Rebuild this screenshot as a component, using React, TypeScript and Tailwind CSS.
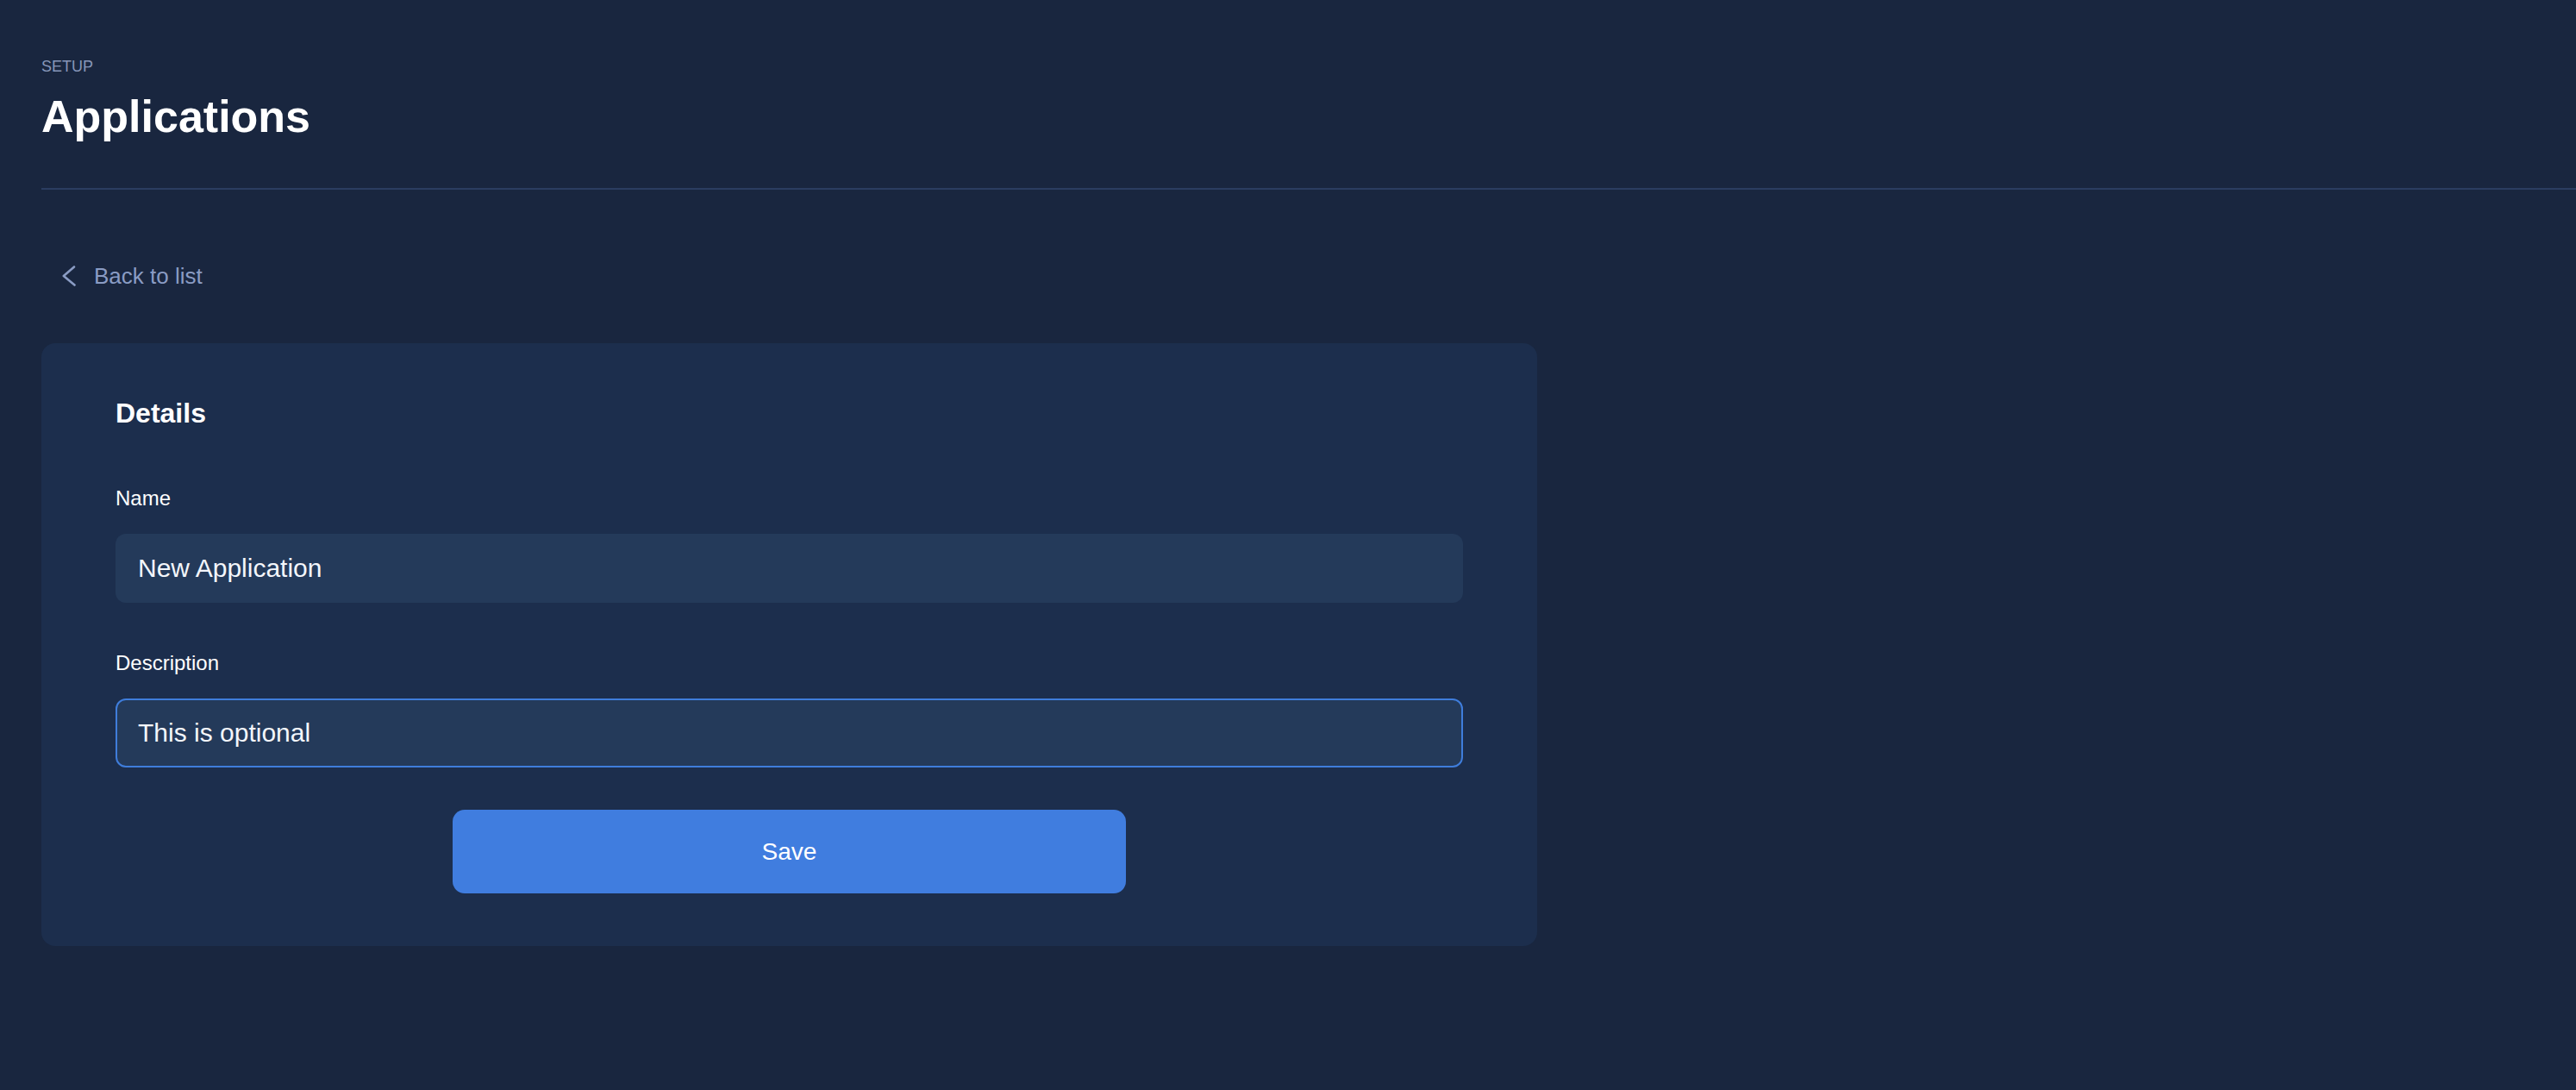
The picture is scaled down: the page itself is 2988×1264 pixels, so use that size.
import { useState } from 'react'

function BackChevron() {
  return (
    <svg width="16" height="24" viewBox="0 0 16 24" fill="none" aria-hidden>
      <polyline
        points="14,1.5 1.8,12 14.5,22.5"
        stroke="currentColor"
        strokeWidth="2.6"
        strokeLinecap="round"
        strokeLinejoin="round"
      />
    </svg>
  )
}

function Field({
  label,
  value,
  focused,
  onChange,
  className,
}: {
  label: string
  value: string
  focused?: boolean
  onChange: (v: string) => void
  className?: string
}) {
  return (
    <div className={className}>
      <label className="block text-[24px] leading-[32px] text-white">{label}</label>
      <input
        value={value}
        onChange={(e) => onChange(e.target.value)}
        className={
          'mt-[25px] block h-[80px] w-full rounded-[12px] border-2 bg-[#243a5a] pl-[24px] text-[30px] text-[#f3f6fb] outline-none ' +
          (focused ? 'border-[#3f7ddb]' : 'border-transparent')
        }
      />
    </div>
  )
}

export default function App() {
  const [name, setName] = useState('New Application')
  const [description, setDescription] = useState('This is optional')

  return (
    <div className="min-h-screen w-full bg-[#19263f] pl-[48px] font-['Liberation_Sans',Arial,sans-serif]">
      <header className="pt-[65px]">
        <p className="text-[18px] leading-[24px] text-[#8796b8] uppercase">Setup</p>
        <h1 className="mt-[14px] text-[52px] leading-[64px] font-bold text-white">Applications</h1>
      </header>

      <div className="mt-[51px] h-[2px] bg-[#2b3d60]" />

      <button
        type="button"
        className="mt-[84px] ml-[24px] flex items-center gap-[21px] text-[26px] leading-[32px] text-[#8a9cc4]"
      >
        <BackChevron />
        <span>Back to list</span>
      </button>

      <section className="mt-[62px] w-[1735px] rounded-[16px] bg-[#1c2e4d] px-[86px] pt-[61px] pb-[61px]">
        <h2 className="text-[32px] leading-[40px] font-bold text-white">Details</h2>

        <Field className="mt-[63px]" label="Name" value={name} onChange={setName} />
        <Field
          className="mt-[54px]"
          label="Description"
          value={description}
          onChange={setDescription}
          focused
        />

        <button
          type="button"
          className="mx-auto mt-[49px] block h-[97px] w-[781px] rounded-[14px] bg-[#407ddf] text-[28px] text-white"
        >
          Save
        </button>
      </section>
    </div>
  )
}
